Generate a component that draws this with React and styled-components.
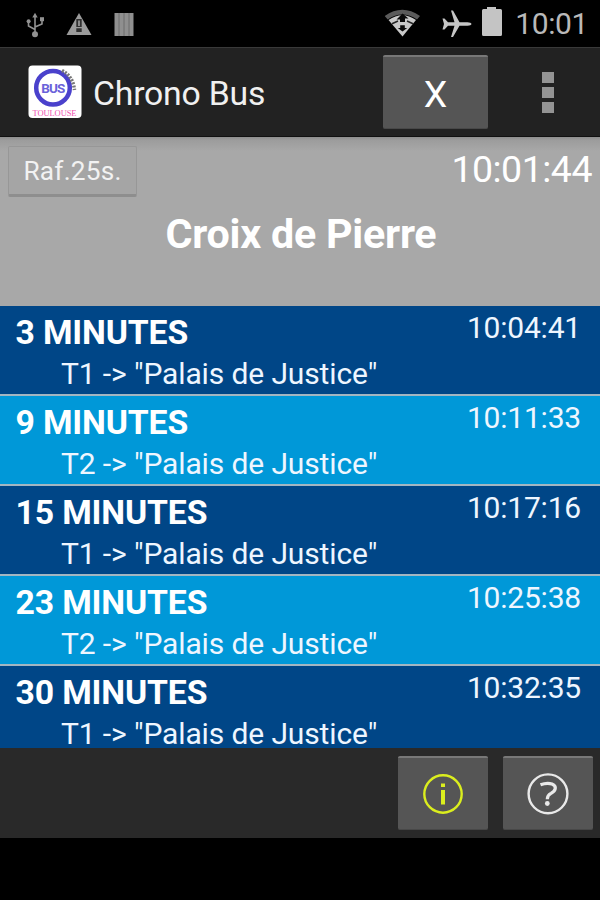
import React from "react";
import styled, {createGlobalStyle} from "styled-components";

const GlobalStyle = createGlobalStyle`
 * {
  box-sizing: border-box;
 }
 body {
  margin: 0;
  background: #000;
  font-family: Roboto, "Noto Sans", sans-serif;
 }
 button {
  font-family: inherit;
  padding: 0;
  border: 0;
 }
`;

const Screen = styled.div`
 width: 600px;
 height: 900px;
 display: flex;
 flex-direction: column;
 background: #000;
 overflow: hidden;
`;

const StatusBar = styled.div`
 height: 47px;
 flex: none;
 display: flex;
 justify-content: space-between;
 padding: 0 12px 0 24px;
`;

const StatusIcons = styled.svg`
 display: block;
 height: 47px;
`;

const StatusRight = styled.div`
 display: flex;
`;

const StatusClock = styled.span`
 font-size: 30px;
 line-height: 48px;
 letter-spacing: -0.4px;
 color: #b9b9b9;
 margin-left: 12px;
`;

const ActionBar = styled.header`
 height: 90px;
 flex: none;
 display: flex;
 align-items: flex-start;
 background: #222;
 border-top: 1px solid #393939;
 border-bottom: 1px solid #111;
 padding: 7px 0 0 28px;
`;

const Logo = styled.svg`
 width: 54px;
 height: 54px;
 margin-top: 10px;
`;

const AppTitle = styled.h1`
 flex: 1;
 margin: 0 0 0 11px;
 font-size: 33.75px;
 font-weight: 400;
 line-height: 78px;
 letter-spacing: -0.2px;
 color: #f0f0f0;
`;

const HoloButton = styled.button`
 width: ${({$wide}) => ($wide ? "105px" : "90px")};
 height: 74px;
 padding-top: ${({$wide}) => ($wide ? "3px" : "0")};
 display: flex;
 align-items: center;
 justify-content: center;
 background: #555;
 border-top: 2px solid #787878;
 border-bottom: 1px solid #484848;
 border-radius: 2px;
 color: #fff;
 font-size: 37.5px;
`;

const OverflowMenu = styled.div`
 width: 112px;
 height: 74px;
 padding: 0 0 0 7px;
 display: flex;
 flex-direction: column;
 align-items: center;
 justify-content: center;
 gap: 4px;
`;

const OverflowDot = styled.span`
 width: 12px;
 height: 11px;
 background: #949494;
`;

const StopPanel = styled.section`
 height: 169px;
 flex: none;
 background: linear-gradient(#8f8f8f, #9c9c9c 3px, #a8a8a8 14px);
`;

const StopTop = styled.div`
 display: flex;
 justify-content: space-between;
 padding: 9px 8px 0;
`;

const RefreshButton = styled.button`
 width: 129px;
 height: 51px;
 background: #a5a5a5;
 border: 1px solid #979797;
 border-bottom: 3px solid #8e8e8e;
 border-radius: 2px;
 color: #f2f2f2;
 font-size: 26.25px;
 line-height: 48px;
 letter-spacing: 0.2px;
`;

const BigClock = styled.span`
 font-size: 37.5px;
 line-height: 46px;
 letter-spacing: -0.5px;
 color: #fff;
`;

const StopName = styled.h2`
 margin: 10px 0 0;
 padding-left: 2px;
 text-align: center;
 font-size: 41.25px;
 font-weight: 700;
 line-height: 54px;
 letter-spacing: -0.25px;
 color: #fff;
`;

const DepartureList = styled.ul`
 height: 442px;
 flex: none;
 margin: 0;
 padding: 0;
 list-style: none;
 overflow: hidden;
`;

const Departure = styled.li`
 height: 90px;
 padding: 0 19px 0 15px;
 display: grid;
 grid-template-columns: 1fr auto;
 grid-template-rows: 48px 40px;
 background: ${({$line}) => ($line === "T1" ? "#004687" : "#0098d8")};
 border-bottom: 2px solid #a3b6c2;
 color: #fff;
`;

const Wait = styled.span`
 padding-left: 0.5px;
 font-size: 33.75px;
 font-weight: 700;
 line-height: 53px;
 letter-spacing: -0.15px;
`;

const PassTime = styled.span`
 font-size: 30px;
 line-height: 44px;
 letter-spacing: -0.2px;
 color: #eef6ff;
`;

const Direction = styled.span`
 padding-left: 46px;
 font-size: 30px;
 line-height: 40px;
 letter-spacing: -0.12px;
 color: #eef6ff;
 white-space: nowrap;
`;

const BottomBar = styled.footer`
 height: 90px;
 flex: none;
 display: flex;
 justify-content: flex-end;
 gap: 15px;
 padding: 8px 7px 0 0;
 background: #292929;
`;

const departures = [
 {wait: "3 MINUTES", time: "10:04:41", line: "T1"},
 {wait: "9 MINUTES", time: "10:11:33", line: "T2"},
 {wait: "15 MINUTES", time: "10:17:16", line: "T1"},
 {wait: "23 MINUTES", time: "10:25:38", line: "T2"},
 {wait: "30 MINUTES", time: "10:32:35", line: "T1"},
];

const NotificationIcons = () => (
 <StatusIcons width='112' viewBox='24 0 112 47'>
  {/* usb */}
  <g stroke='#929292' strokeWidth='1.6' fill='none'>
   <path d='M35 34V15M35 29.5L28.5 26V21M35 27L42 24V19' />
  </g>
  <g fill='#929292'>
   <circle cx='35' cy='34.2' r='3' />
   <path d='M32.3 17.5L35 12.8L37.7 17.5Z' />
   <circle cx='28.6' cy='21.3' r='2' />
   <path d='M40 17.2h4v4h-4z' />
  </g>
  {/* warning */}
  <path d='M79 13L91.5 35H66.5Z' fill='#9b9b9b' />
  <path d='M76.3 19h5.4v8h-5.4zM76.3 28.2h5.4v3.8h-5.4z' fill='#303030' />
  <path d='M78 20.5h2v5.5h-2z' fill='#8a8a8a' />
  {/* sim bars */}
  <path d='M114.5 13h19v23h-19z' fill='#8f8f8f' />
  <path d='M119 13v23M124 13v23M129 13v23' stroke='#6c6c6c' />
 </StatusIcons>
);

const SystemIcons = () => (
 <StatusIcons width='119' viewBox='385 0 119 47'>
  {/* wifi */}
  <path
   d='M385.7 16Q403.3 3.5 421 16L418 19.5Q403.3 9.5 388.7 19.5Z'
   fill='#5b5b5b'
  />
  <path d='M389.5 20Q403.3 10.5 417 20L403.5 36.5Z' fill='#c9c9c9' />
  <path
   d='M403.5 13.5L397.5 19.5H401V22H406V18.5H409.5ZM403.5 31.5L398.8 28H401.2V25.2H405.8V28H408.2Z'
   fill='#0a0a0a'
  />
  <path
   d='M393 23.8L399 21M414 23.8L408 21'
   fill='none'
   stroke='#242424'
   strokeWidth='1.5'
  />
  {/* airplane */}
  <path
   d='M472.5 24Q472 25.7 468.5 25.7H460.5L454 37H452L455.5 25.7H449L445.5 29.5H443.5L445 24L443.5 18.500H445.5L449 22.300H455.5L452 10.500H454L460.5 22.300H468.5Q472 22.300 472.5 24Z'
   fill='#c6c6c6'
  />
  {/* battery */}
  <path
   d='M488 7h9v2h4.5q1.5 0 1.5 1.5v24q0 1.5-1.5 1.5h-17q-1.5 0-1.5-1.5v-24q0-1.5 1.5-1.5h3.5z'
   fill='#c4c4c4'
  />
 </StatusIcons>
);

const BusLogo = () => (
 <Logo viewBox='0 0 54 54'>
  <rect x='0.5' y='0.5' width='53' height='52.5' rx='4' fill='#fff' />
  <circle cx='25' cy='22.8' r='16.8' fill='none' stroke='#4a41cc' strokeWidth='4.5' />
  <path d='M34 5.5Q45 11 46.5 25' fill='none' stroke='#777' strokeWidth='3.5' strokeDasharray='2 1.3' />
  <text x='25.3' y='27.5' textAnchor='middle' textLength='24' fontSize='13.5' fontWeight='700' fill='#6a62da'>
   BUS
  </text>
  <text x='26.5' y='50.5' textAnchor='middle' textLength='44' fontSize='8.5' fontFamily='Liberation Serif, serif' fill='#f052b0'>
   TOULOUSE
  </text>
 </Logo>
);

const InfoIcon = () => (
 <svg width='42' height='42' viewBox='0 0 42 42'>
  <circle cx='21' cy='21' r='18.7' fill='none' stroke='#dbee1e' strokeWidth='2.4' />
  <path d='M19 10.5h4v3.5h-4zM19 17h4v14.5h-4z' fill='#dbee1e' />
 </svg>
);

const HelpIcon = () => (
 <svg width='42' height='42' viewBox='0 0 42 42'>
  <circle cx='21' cy='20.8' r='19.4' fill='none' stroke='#e9e9e9' strokeWidth='2.4' />
  <path
   d='M13.5 11.8Q20 9.3 25 11C30.5 13.3 28.5 17.8 24 20.3Q20.3 22.2 20.3 26.2'
   fill='none'
   stroke='#e9e9e9'
   strokeWidth='3.2'
  />
  <circle cx='20.3' cy='30.5' r='2.4' fill='#e9e9e9' />
 </svg>
);

const App = () => {
 return (
  <Screen>
   <GlobalStyle />
   <StatusBar>
    <NotificationIcons />
    <StatusRight>
     <SystemIcons />
     <StatusClock>10:01</StatusClock>
    </StatusRight>
   </StatusBar>

   <ActionBar>
    <BusLogo />
    <AppTitle>Chrono Bus</AppTitle>
    <HoloButton $wide>X</HoloButton>
    <OverflowMenu>
     <OverflowDot />
     <OverflowDot />
     <OverflowDot />
    </OverflowMenu>
   </ActionBar>

   <StopPanel>
    <StopTop>
     <RefreshButton>Raf.25s.</RefreshButton>
     <BigClock>10:01:44</BigClock>
    </StopTop>
    <StopName>Croix de Pierre</StopName>
   </StopPanel>

   <DepartureList>
    {departures.map((item, index) => (
     <Departure key={index} $line={item.line}>
      <Wait>{item.wait}</Wait>
      <PassTime>{item.time}</PassTime>
      <Direction>{item.line + ' -> "Palais de Justice"'}</Direction>
     </Departure>
    ))}
   </DepartureList>

   <BottomBar>
    <HoloButton>
     <InfoIcon />
    </HoloButton>
    <HoloButton>
     <HelpIcon />
    </HoloButton>
   </BottomBar>
  </Screen>
 );
};

export default App;
